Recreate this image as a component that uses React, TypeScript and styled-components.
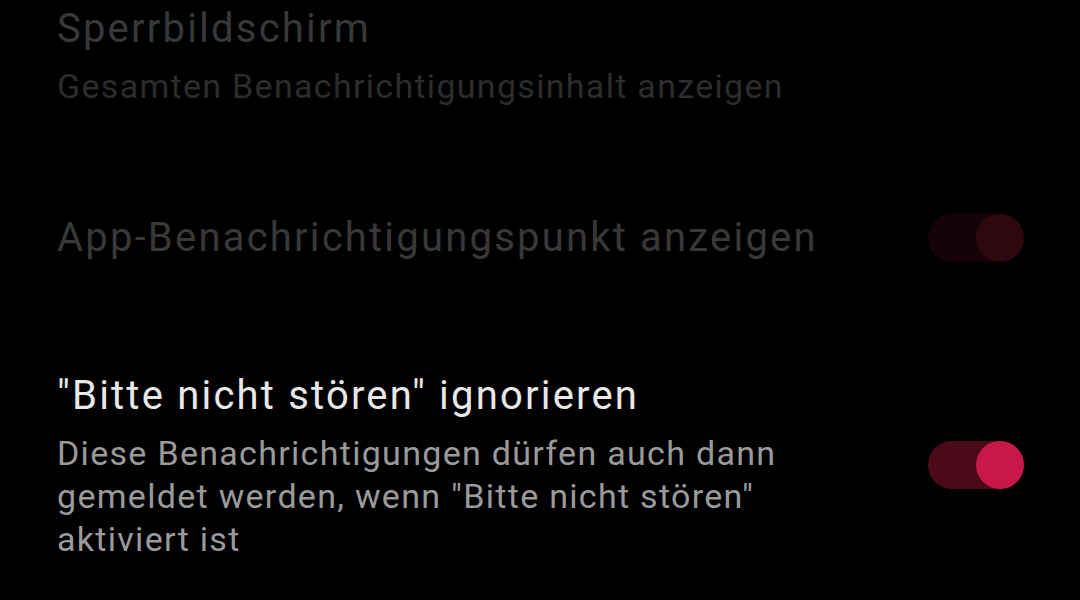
import React from 'react';
import styled, { createGlobalStyle } from 'styled-components';

const GlobalStyle = createGlobalStyle`
  html, body {
    margin: 0;
    padding: 0;
    background: #000;
  }
  body {
    font-family: Roboto, "Noto Sans", sans-serif;
    width: 1080px;
    height: 600px;
    overflow: hidden;
  }
`;

const List = styled.div`
  display: flex;
  flex-direction: column;
  gap: 102px;
  padding: 1px 56px 0 57px;
`;

const Row = styled.div`
  display: flex;
  align-items: center;
  gap: 68px;
`;

const TextBlock = styled.div`
  flex: 1;
  display: flex;
  flex-direction: column;
`;

const Title = styled.div<{ $disabled?: boolean }>`
  font-size: 40px;
  line-height: 56px;
  letter-spacing: 2.2px;
  color: ${p => (p.$disabled ? '#383838' : '#e8e8e8')};
  margin-bottom: 8px;
  &:last-child {
    margin-bottom: 0;
  }
`;

const Summary = styled.div<{ $disabled?: boolean }>`
  font-size: 34px;
  line-height: 43px;
  letter-spacing: 1.3px;
  color: ${p => (p.$disabled ? '#2c2c2c' : '#9a9a9a')};
`;

const Track = styled.div<{ $disabled?: boolean }>`
  flex-shrink: 0;
  width: 96px;
  height: 48px;
  border-radius: 24px;
  display: flex;
  justify-content: flex-end;
  background: ${p => (p.$disabled ? '#150308' : '#4b0a1b')};
`;

const Thumb = styled.div<{ $disabled?: boolean }>`
  width: 48px;
  height: 48px;
  border-radius: 50%;
  background: ${p => (p.$disabled ? '#2e0711' : '#c8184a')};
`;

function Switch({ disabled }: { disabled?: boolean }) {
  return (
    <Track $disabled={disabled}>
      <Thumb $disabled={disabled} />
    </Track>
  );
}

export default function App() {
  return (
    <>
      <GlobalStyle />
      <List>
        <Row>
          <TextBlock>
            <Title $disabled>Sperrbildschirm</Title>
            <Summary $disabled>Gesamten Benachrichtigungsinhalt anzeigen</Summary>
          </TextBlock>
        </Row>
        <Row>
          <TextBlock>
            <Title $disabled>App-Benachrichtigungspunkt anzeigen</Title>
          </TextBlock>
          <Switch disabled />
        </Row>
        <Row>
          <TextBlock>
            <Title>"Bitte nicht stören" ignorieren</Title>
            <Summary>
              Diese Benachrichtigungen dürfen auch dann gemeldet werden, wenn "Bitte nicht stören" aktiviert ist
            </Summary>
          </TextBlock>
          <Switch />
        </Row>
      </List>
    </>
  );
}
